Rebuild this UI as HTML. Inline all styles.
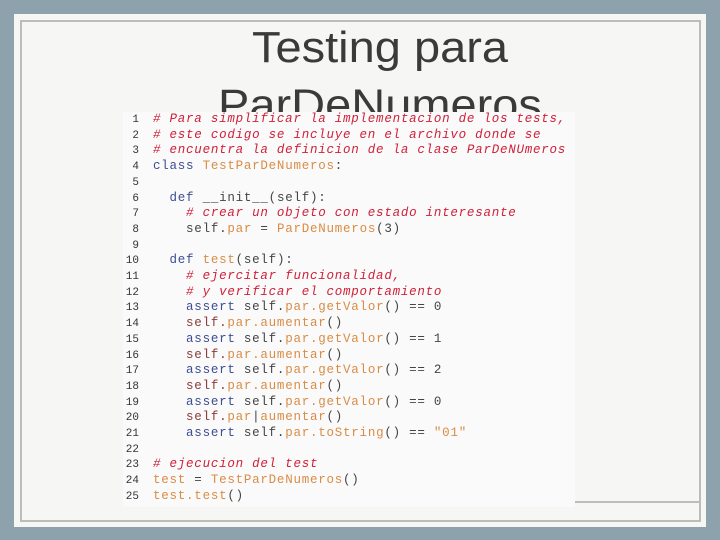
<!DOCTYPE html>
<html><head><meta charset="utf-8"><style>
html,body{margin:0;padding:0}
body{width:720px;height:540px;background:#8ea2ad;position:relative;overflow:hidden;font-family:"Liberation Sans",sans-serif}
.panel{position:absolute;left:14px;top:14px;width:692px;height:513px;background:#f6f6f5}
.frame{position:absolute;left:20px;top:20px;width:677px;height:498px;border:2px solid #bdbdb8}
.hl{position:absolute;left:575px;top:501px;width:124px;height:2px;background:#bdbdb8}
.title{position:absolute;left:140px;width:480px;top:19px;text-align:center;font-size:47px;line-height:62px;color:#3a3a3a;transform:scaleY(0.92);transform-origin:top}
.code{position:absolute;left:123px;top:112px;width:452px;height:395px;background:#fafafa;font-family:"Liberation Mono",monospace;font-size:12.5px;letter-spacing:0.76px;color:#444}
.ln{position:absolute;left:0;height:15.7px;line-height:15.7px;white-space:pre}
.n{display:inline-block;width:16px;text-align:right;color:#333;font-size:11px;letter-spacing:0;margin-right:14px}
.c{color:#d0203a;font-style:italic}
.k{color:#3c4d94}
.o{color:#d98c45}
.s{color:#8a3a3a}
</style></head><body>
<div class="panel"></div>
<div class="frame"></div>
<div class="hl"></div>
<div class="title">Testing para<br>ParDeNumeros</div>
<div class="code">
<div class="ln" style="top:0px"><span class="n">1</span><span class="c"># Para simplificar la implementacion de los tests,</span></div>
<div class="ln" style="top:15.7px"><span class="n">2</span><span class="c"># este codigo se incluye en el archivo donde se</span></div>
<div class="ln" style="top:31.4px"><span class="n">3</span><span class="c"># encuentra la definicion de la clase ParDeNUmeros</span></div>
<div class="ln" style="top:47.1px"><span class="n">4</span><span class="k">class</span> <span class="o">TestParDeNumeros</span>:</div>
<div class="ln" style="top:62.8px"><span class="n">5</span></div>
<div class="ln" style="top:78.5px"><span class="n">6</span>  <span class="k">def</span> __init__(self):</div>
<div class="ln" style="top:94.2px"><span class="n">7</span>    <span class="c"># crear un objeto con estado interesante</span></div>
<div class="ln" style="top:109.9px"><span class="n">8</span>    self.<span class="o">par</span> = <span class="o">ParDeNumeros</span>(3)</div>
<div class="ln" style="top:125.6px"><span class="n">9</span></div>
<div class="ln" style="top:141.3px"><span class="n">10</span>  <span class="k">def</span> <span class="o">test</span>(self):</div>
<div class="ln" style="top:157px"><span class="n">11</span>    <span class="c"># ejercitar funcionalidad,</span></div>
<div class="ln" style="top:172.7px"><span class="n">12</span>    <span class="c"># y verificar el comportamiento</span></div>
<div class="ln" style="top:188.4px"><span class="n">13</span>    <span class="k">assert</span> self.<span class="o">par.getValor</span>() == 0</div>
<div class="ln" style="top:204.1px"><span class="n">14</span>    <span class="s">self.</span><span class="o">par.aumentar</span>()</div>
<div class="ln" style="top:219.8px"><span class="n">15</span>    <span class="k">assert</span> self.<span class="o">par.getValor</span>() == 1</div>
<div class="ln" style="top:235.5px"><span class="n">16</span>    <span class="s">self.</span><span class="o">par.aumentar</span>()</div>
<div class="ln" style="top:251.2px"><span class="n">17</span>    <span class="k">assert</span> self.<span class="o">par.getValor</span>() == 2</div>
<div class="ln" style="top:266.9px"><span class="n">18</span>    <span class="s">self.</span><span class="o">par.aumentar</span>()</div>
<div class="ln" style="top:282.6px"><span class="n">19</span>    <span class="k">assert</span> self.<span class="o">par.getValor</span>() == 0</div>
<div class="ln" style="top:298.3px"><span class="n">20</span>    <span class="s">self.</span><span class="o">par</span>|<span class="o">aumentar</span>()</div>
<div class="ln" style="top:314px"><span class="n">21</span>    <span class="k">assert</span> self.<span class="o">par.toString</span>() == <span class="o">"01"</span></div>
<div class="ln" style="top:329.7px"><span class="n">22</span></div>
<div class="ln" style="top:345.4px"><span class="n">23</span><span class="c"># ejecucion del test</span></div>
<div class="ln" style="top:361.1px"><span class="n">24</span><span class="o">test</span> = <span class="o">TestParDeNumeros</span>()</div>
<div class="ln" style="top:376.8px"><span class="n">25</span><span class="o">test.test</span>()</div>
</div>
</body></html>
